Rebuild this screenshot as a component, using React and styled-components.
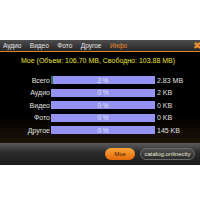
import React from 'react';
import styled, { createGlobalStyle } from 'styled-components';

const GlobalStyle = createGlobalStyle`
  body {
    margin: 0;
    background: #fff;
    font-family: "Liberation Sans", Arial, sans-serif;
  }
`;

const rows = [
  { label: 'Всего', pct: 2, size: '2.83 MB' },
  { label: 'Аудио', pct: 0, size: '2 KB' },
  { label: 'Видео', pct: 0, size: '0 KB' },
  { label: 'Фото', pct: 0, size: '0 KB' },
  { label: 'Другое', pct: 0, size: '145 KB' },
];

const tabs = ['Аудио', 'Видео', 'Фото', 'Другое', 'Инфо'];

const App = () => {
  return (
    <Screen>
      <GlobalStyle />
      <TopSpace />
      <Toolbar>
        <Tabs>
          {tabs.map((t) => (
            <Tab key={t} active={t === 'Инфо'}>{t}</Tab>
          ))}
        </Tabs>
        <Close>✖</Close>
      </Toolbar>
      <Content>
        <Title>Мое (Объем: 106.70 MB, Свободно: 103.88 MB)</Title>
        <Rows>
          {rows.map((r) => (
            <Row key={r.label}>
              <Label>{r.label}</Label>
              <Bar>
                <Fill style={{ width: r.pct + '%' }} />
                <Pct>{r.pct} %</Pct>
              </Bar>
              <Size>{r.size}</Size>
            </Row>
          ))}
        </Rows>
      </Content>
      <Footer>
        <OrangeButton>Мое</OrangeButton>
        <GrayButton>catalog.onlinecity</GrayButton>
      </Footer>
    </Screen>
  );
};

const Screen = styled.div`
  width: 200px;
  height: 200px;
  display: flex;
  flex-direction: column;
`;

const TopSpace = styled.div`
  height: 40px;
`;

const Toolbar = styled.div`
  height: 11px;
  display: flex;
  align-items: center;
  justify-content: space-between;
  background: linear-gradient(#4d4d4d, #262626);
  border-bottom: 1px solid #d2872c;
`;

const Tabs = styled.div`
  display: flex;
  gap: 8.5px;
  padding-left: 3px;
`;

const Tab = styled.span`
  font-size: 6.5px;
  color: ${(p) => (p.active ? '#e88a2a' : '#e6e6e6')};
`;

const Close = styled.span`
  font-size: 10px;
  color: #e9902c;
  line-height: 1;
  margin-right: -1px;
`;

const Content = styled.div`
  height: 91px;
  background: linear-gradient(#000 70%, #1e1408);
  display: flex;
  flex-direction: column;
  padding-top: 5px;
  box-sizing: border-box;
`;

const Title = styled.div`
  font-size: 7px;
  color: #e8e03a;
  text-align: center;
  padding-right: 4px;
`;

const Rows = styled.div`
  margin-top: 12px;
  display: flex;
  flex-direction: column;
  gap: 4.5px;
`;

const Row = styled.div`
  display: flex;
  align-items: center;
  height: 8px;
`;

const Label = styled.span`
  width: 50px;
  text-align: right;
  font-size: 7px;
  color: #e0e0e0;
  padding-right: 1px;
`;

const Bar = styled.div`
  position: relative;
  width: 104px;
  height: 8px;
  background: #9493f2;
  display: flex;
  align-items: center;
  justify-content: center;
`;

const Fill = styled.div`
  position: absolute;
  left: 0;
  top: 0;
  bottom: 0;
  background: #2f6e5e;
`;

const Pct = styled.span`
  position: relative;
  font-size: 6.5px;
  color: #e4e4fa;
`;

const Size = styled.span`
  padding-left: 2px;
  font-size: 7px;
  color: #e0e0e0;
`;

const Footer = styled.div`
  height: 22px;
  background: linear-gradient(#5a5a5a, #2a2a2a 45%, #1a1a1a);
  display: flex;
  align-items: center;
  justify-content: flex-end;
  gap: 5px;
  padding-right: 5px;
`;

const OrangeButton = styled.div`
  width: 30px;
  height: 12px;
  border-radius: 6px;
  background: linear-gradient(#ffa43a, #e36b0a);
  color: #3a1a00;
  font-size: 6px;
  display: flex;
  align-items: center;
  justify-content: center;
`;

const GrayButton = styled.div`
  width: 55px;
  height: 12px;
  box-sizing: border-box;
  border: 1px solid #6a6a6a;
  border-radius: 6px;
  background: linear-gradient(#505050, #2a2a2a);
  color: #e8e8d0;
  font-size: 6px;
  display: flex;
  align-items: center;
  justify-content: center;
`;

export default App;
